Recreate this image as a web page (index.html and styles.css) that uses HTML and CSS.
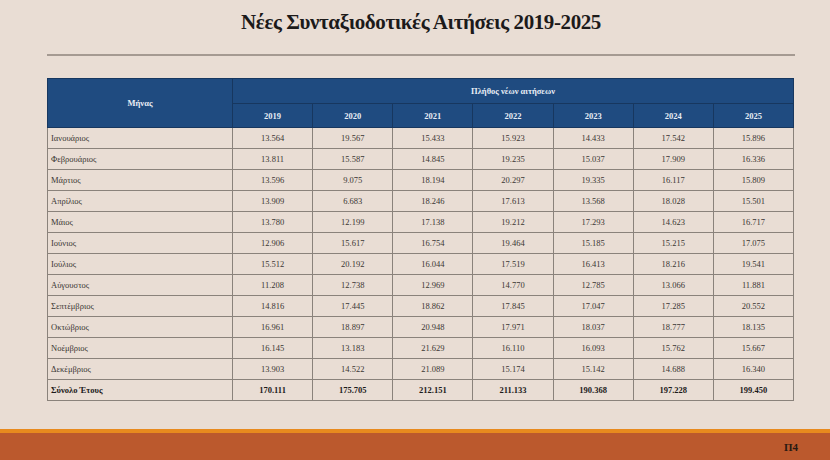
FILE: index.html
```html
<!DOCTYPE html>
<html lang="el">
<head>
    <meta charset="UTF-8">
    <meta name="viewport" content="width=device-width, initial-scale=1.0">
    <title>Νέες Συνταξιοδοτικές Αιτήσεις 2019-2025</title>
    <link rel="stylesheet" href="styles.css">
</head>
<body>
    <div class="slide">
        <div class="content">
            <h1>Νέες Συνταξιοδοτικές Αιτήσεις 2019-2025</h1>
            <div class="rule"></div>
            <table class="data">
                <colgroup>
                    <col class="c-month">
                    <col><col><col><col><col><col><col>
                </colgroup>
                <thead>
                    <tr>
                        <th rowspan="2" class="h-month">Μήνας</th>
                        <th colspan="7">Πλήθος νέων αιτήσεων</th>
                    </tr>
                    <tr class="years">
                        <th>2019</th><th>2020</th><th>2021</th><th>2022</th><th>2023</th><th>2024</th><th>2025</th>
                    </tr>
                </thead>
                <tbody>
                    <tr><td>Ιανουάριος</td><td>13.564</td><td>19.567</td><td>15.433</td><td>15.923</td><td>14.433</td><td>17.542</td><td>15.896</td></tr>
                    <tr><td>Φεβρουάριος</td><td>13.811</td><td>15.587</td><td>14.845</td><td>19.235</td><td>15.037</td><td>17.909</td><td>16.336</td></tr>
                    <tr><td>Μάρτιος</td><td>13.596</td><td>9.075</td><td>18.194</td><td>20.297</td><td>19.335</td><td>16.117</td><td>15.809</td></tr>
                    <tr><td>Απρίλιος</td><td>13.909</td><td>6.683</td><td>18.246</td><td>17.613</td><td>13.568</td><td>18.028</td><td>15.501</td></tr>
                    <tr><td>Μάιος</td><td>13.780</td><td>12.199</td><td>17.138</td><td>19.212</td><td>17.293</td><td>14.623</td><td>16.717</td></tr>
                    <tr><td>Ιούνιος</td><td>12.906</td><td>15.617</td><td>16.754</td><td>19.464</td><td>15.185</td><td>15.215</td><td>17.075</td></tr>
                    <tr><td>Ιούλιος</td><td>15.512</td><td>20.192</td><td>16.044</td><td>17.519</td><td>16.413</td><td>18.216</td><td>19.541</td></tr>
                    <tr><td>Αύγουστος</td><td>11.208</td><td>12.738</td><td>12.969</td><td>14.770</td><td>12.785</td><td>13.066</td><td>11.881</td></tr>
                    <tr><td>Σεπτέμβριος</td><td>14.816</td><td>17.445</td><td>18.862</td><td>17.845</td><td>17.047</td><td>17.285</td><td>20.552</td></tr>
                    <tr><td>Οκτώβριος</td><td>16.961</td><td>18.897</td><td>20.948</td><td>17.971</td><td>18.037</td><td>18.777</td><td>18.135</td></tr>
                    <tr><td>Νοέμβριος</td><td>16.145</td><td>13.183</td><td>21.629</td><td>16.110</td><td>16.093</td><td>15.762</td><td>15.667</td></tr>
                    <tr><td>Δεκέμβριος</td><td>13.903</td><td>14.522</td><td>21.089</td><td>15.174</td><td>15.142</td><td>14.688</td><td>16.340</td></tr>
                    <tr class="total"><td>Σύνολο Έτους</td><td>170.111</td><td>175.705</td><td>212.151</td><td>211.133</td><td>190.368</td><td>197.228</td><td>199.450</td></tr>
                </tbody>
            </table>
        </div>
        <div class="footer">
            <span class="page">Π4</span>
        </div>
    </div>
</body>
</html>
```
FILE: styles.css
```css
body {
    margin: 0;
    font-family: "Liberation Serif", "DejaVu Serif", serif;
    background: #e9ddd4;
}
.slide {
    width: 830px;
    height: 460px;
    display: flex;
    flex-direction: column;
    background: #e9ddd4;
}
.content {
    flex: 1;
    padding: 0 35px 0 47px;
}
h1 {
    margin: 10px 0 0;
    height: 26px;
    font-size: 21px;
    font-weight: bold;
    text-align: center;
    color: #1c1a1a;
    letter-spacing: -0.4px;
}
.rule {
    margin-top: 18px;
    height: 2px;
    background: #a59a92;
}
.data {
    margin-top: 22px;
    width: 747px;
    border-collapse: collapse;
    table-layout: fixed;
    font-size: 8.5px;
    color: #3a3633;
}
.c-month {
    width: 185px;
}
.data th {
    background: #1f4b80;
    color: #e8edf5;
    font-weight: bold;
    height: 24px;
    padding: 0;
    border: 1px solid #17375f;
}
.data .years th {
    height: 23px;
}
.data td {
    height: 20px;
    padding: 0;
    text-align: center;
    border: 1px solid #8a827b;
}
.data td:first-child {
    text-align: left;
    padding-left: 3px;
}
.total td {
    font-weight: bold;
    color: #1c1a1a;
}
.footer {
    height: 27px;
    border-top: 4px solid #e88a1e;
    background: #bb592d;
    display: flex;
    align-items: center;
    justify-content: flex-end;
    padding-right: 32px;
}
.page {
    font-size: 11px;
    font-weight: bold;
    color: #2a1a12;
}
```
